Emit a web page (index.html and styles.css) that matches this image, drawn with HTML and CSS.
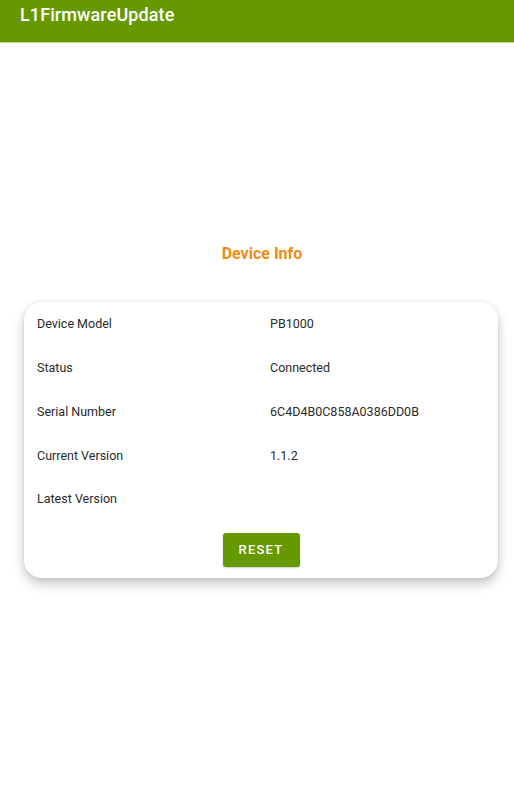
FILE: index.html
```html
<!DOCTYPE html>
<html lang="en">
<head>
    <meta charset="UTF-8">
    <meta name="viewport" content="width=device-width, initial-scale=1.0">
    <title>L1FirmwareUpdate</title>
    <link rel="stylesheet" href="styles.css">
</head>
<body>
    <header class="app-bar">
        <span class="app-title">L1FirmwareUpdate</span>
    </header>

    <main class="content">
        <h2 class="section-title">Device Info</h2>

        <div class="card">
            <div class="info-row">
                <span class="info-label">Device Model</span>
                <span class="info-value">PB1000</span>
            </div>
            <div class="info-row">
                <span class="info-label">Status</span>
                <span class="info-value">Connected</span>
            </div>
            <div class="info-row">
                <span class="info-label">Serial Number</span>
                <span class="info-value">6C4D4B0C858A0386DD0B</span>
            </div>
            <div class="info-row">
                <span class="info-label">Current Version</span>
                <span class="info-value">1.1.2</span>
            </div>
            <div class="info-row">
                <span class="info-label">Latest Version</span>
                <span class="info-value"></span>
            </div>

            <div class="card-actions">
                <a href="#" class="btn">RESET</a>
            </div>
        </div>
    </main>
</body>
</html>
```

FILE: styles.css
```css
* {
    margin: 0;
    padding: 0;
    box-sizing: border-box;
}

body {
    font-family: Roboto, "Noto Sans", sans-serif;
    background-color: #fff;
    color: #222;
    width: 514px;
    height: 800px;
    overflow: hidden;
}

.app-bar {
    height: 43px;
    background-color: #669900;
    border-bottom: 1px solid #b5d98a;
    padding: 0 20px;
    display: flex;
    align-items: center;
    padding-bottom: 13px;
}

.app-title {
    color: #fff;
    font-size: 18px;
    font-weight: 500;
    letter-spacing: 0.1px;
}

.content {
    padding: 0 16px 0 24px;
}

.section-title {
    color: #ee8c14;
    font-size: 16px;
    font-weight: 700;
    text-align: center;
    margin-top: 200px;
    padding-left: 2px;
    height: 22px;
    line-height: 22px;
}

.card {
    margin-top: 37px;
    width: 474px;
    background-color: #fff;
    border-radius: 18px;
    box-shadow: 0px 6px 12px rgba(0, 0, 0, 0.22), 0px 0px 4px rgba(0, 0, 0, 0.08);
    padding: 0 13px 11px 13px;
}

.info-row {
    display: flex;
    height: 43.75px;
    align-items: center;
    font-size: 12.5px;
    color: #2a2a2a;
}

.info-label {
    width: 233px;
}

.card-actions {
    display: flex;
    justify-content: center;
    padding-top: 12px;
}

.btn {
    display: inline-block;
    background-color: #669900;
    color: #fff;
    text-decoration: none;
    font-size: 13px;
    font-weight: 500;
    letter-spacing: 1.2px;
    width: 77px;
    height: 34px;
    line-height: 34px;
    text-align: center;
    border-radius: 3px;
    box-shadow: 0 1px 2px rgba(0, 0, 0, 0.2);
}
```
